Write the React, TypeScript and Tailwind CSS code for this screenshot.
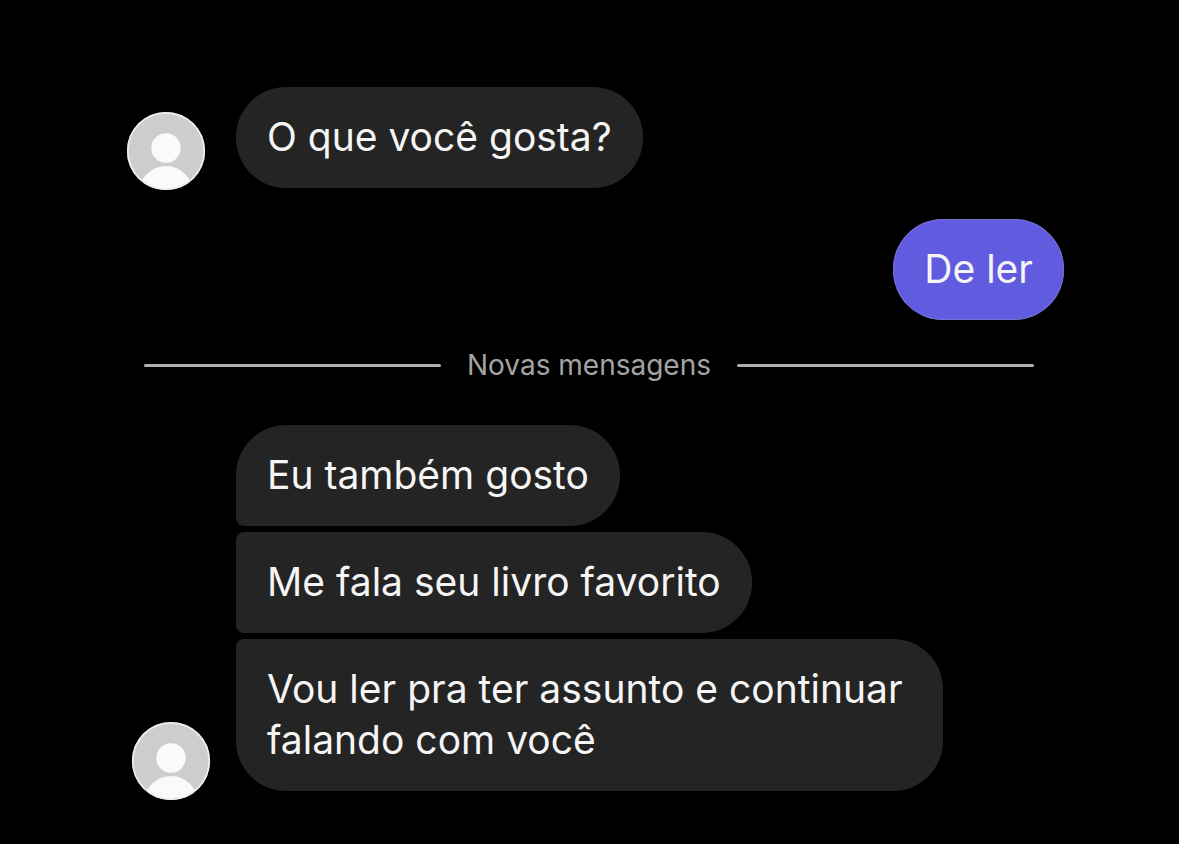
import type { ReactNode } from "react";

function Avatar({ id, className }: { id: string; className: string }) {
  return (
    <svg viewBox="0 0 80 80" className={`size-20 shrink-0 ${className}`} role="img" aria-label="Contato">
      <defs>
        <clipPath id={id}>
          <circle cx="40" cy="40" r="39" />
        </clipPath>
      </defs>
      <circle cx="40" cy="40" r="39" fill="#cdcdcd" />
      <g clipPath={`url(#${id})`} fill="#fafafa">
        <circle cx="40" cy="37" r="14.7" />
        <circle cx="40" cy="82" r="27" />
      </g>
      <circle cx="40" cy="40" r="38.2" fill="none" stroke="#ececec" strokeWidth="1.8" />
    </svg>
  );
}

function Bubble({ className, children }: { className: string; children: ReactNode }) {
  return (
    <p className={`w-fit pt-6 pb-[26px] pl-[31px] text-[39px] leading-[51px] text-[#f5f5f5] ${className}`}>
      {children}
    </p>
  );
}

export default function App() {
  return (
    <main className="min-h-screen bg-black px-[115px] pt-[87px] pb-[54px] font-['Inter',sans-serif]">
      <section className="flex items-end gap-[30px] pl-[11px]">
        <Avatar id="avatar-first" className="-mb-[3px]" />
        <Bubble className="rounded-[50px] bg-[#242424] pr-[31px]">O que você gosta?</Bubble>
      </section>
      <section className="mt-[31px] flex justify-end">
        <Bubble className="rounded-[50px] bg-[#615be0] pr-[31px] inset-ring inset-ring-[#7871cc]">De ler</Bubble>
      </section>
      <div className="mt-[27px] flex items-center gap-[26px] pr-[30px] pl-[29px]">
        <span className="h-[3px] flex-1 rounded-full bg-[#adadad]" />
        <h2 className="text-[28px] leading-9 text-[#a3a3a3]">Novas mensagens</h2>
        <span className="h-[3px] flex-1 rounded-full bg-[#adadad]" />
      </div>
      <section className="mt-[42px] flex items-end gap-[25px] pl-4">
        <Avatar id="avatar-second" className="-mb-[10px]" />
        <div className="flex flex-col gap-[6px]">
          <Bubble className="rounded-[50px] rounded-bl-lg bg-[#242424] pr-[31px]">Eu também gosto</Bubble>
          <Bubble className="rounded-r-[50px] rounded-l-lg bg-[#242424] pr-[31px]">Me fala seu livro favorito</Bubble>
          <Bubble className="rounded-[50px] rounded-tl-lg bg-[#242424] pr-10">
            Vou ler pra ter assunto e continuar
            <br />
            falando com você
          </Bubble>
        </div>
      </section>
    </main>
  );
}
